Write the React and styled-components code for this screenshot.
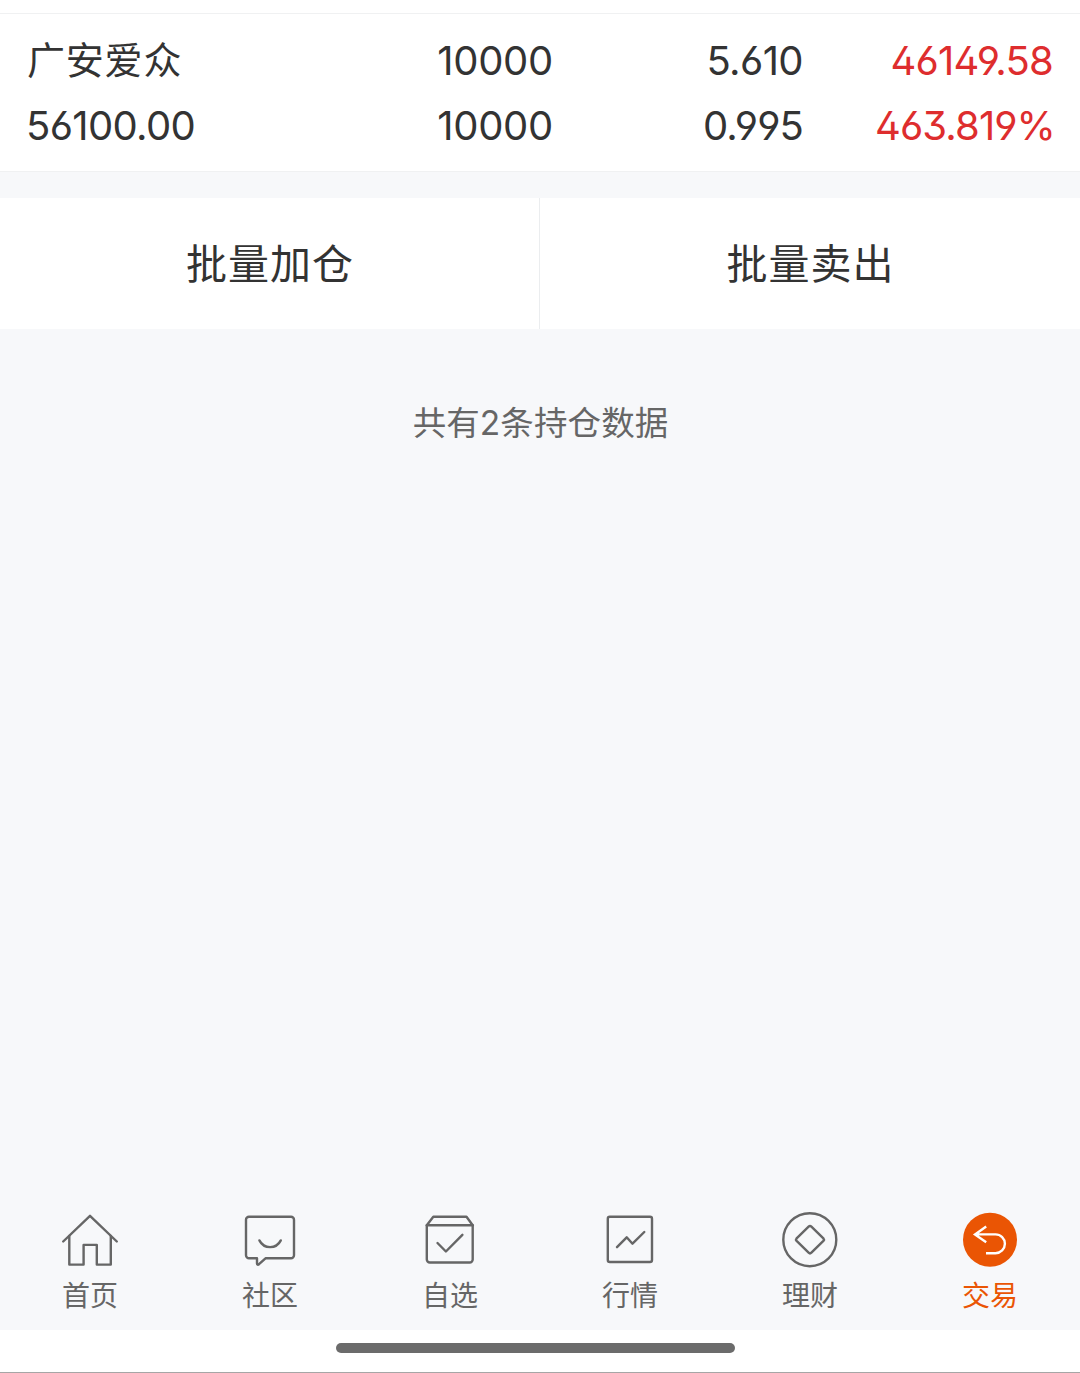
import React from 'react';
import styled, { createGlobalStyle } from 'styled-components';

const GlobalStyle = createGlobalStyle`
    * {
        box-sizing: border-box;
    }

    body {
        margin: 0;
        background: #f7f8fa;
        color: #333333;
        font-family: Inter, 'Noto Sans CJK SC', sans-serif;
    }
`;

const Page = styled.div`
    display: flex;
    flex-direction: column;
    height: 1373px;
    overflow: hidden;
`;

const Holdings = styled.section`
    padding-top: 13px;
    background: #ffffff;
`;

const Holding = styled.div`
    display: grid;
    grid-template-columns: 277px 250px 250px 250px;
    grid-template-rows: 65px 65px;
    height: 159px;
    padding: 14px 26px 13px;
    border-top: 1px solid #f0f1f2;
    border-bottom: 1px solid #f0f1f2;
`;

const StockName = styled.span`
    padding-left: 1px;
    font-size: 38px;
    line-height: 65px;
    letter-spacing: 0.8px;
`;

const Value = styled.span`
    margin-right: ${({ $percent }) => ($percent ? '-2px' : '0')};
    font-size: 40px;
    line-height: 66px;
    letter-spacing: ${({ $spacing }) => $spacing || '-0.6px'};
    text-align: ${({ $left }) => ($left ? 'left' : 'right')};
    color: ${({ $gain }) => ($gain ? '#de2d2e' : 'inherit')};
    font-feature-settings: 'cv03', 'cv04', 'ss01';
    white-space: nowrap;
`;

const Actions = styled.div`
    display: grid;
    grid-template-columns: 1fr 1fr;
    height: 131px;
    margin-top: 26px;
    background: #ffffff;
`;

const ActionButton = styled.button`
    padding: 0 0 5px 1px;
    border: 0;
    border-right: ${({ $divided }) => ($divided ? '1px solid #ebedef' : '0')};
    background: none;
    color: #333333;
    font-family: inherit;
    font-size: 41px;
    letter-spacing: 1px;
`;

const Summary = styled.p`
    flex: 1;
    margin: 0;
    padding: 70px 0 0 1px;
    color: #666666;
    font-size: 33.5px;
    line-height: 48px;
    letter-spacing: 0.1px;
    text-align: center;
`;

const TabBar = styled.nav`
    display: grid;
    grid-template-columns: repeat(6, 1fr);
    height: 120px;
`;

const Tab = styled.a`
    display: flex;
    flex-direction: column;
    align-items: center;
    color: ${({ $active }) => ($active ? '#ea5504' : '#666666')};

    svg {
        width: 60px;
        height: 60px;
        fill: none;
        stroke: currentColor;
        stroke-width: 2.4;
        stroke-linecap: round;
        stroke-linejoin: round;
    }
`;

const TabLabel = styled.span`
    font-size: 28px;
    line-height: 40px;
    margin-top: 6px;
`;

const HomeArea = styled.div`
    display: flex;
    justify-content: center;
    height: 43px;
    padding: 13px 9px 0 0;
    border-bottom: 1px solid #a6a6a6;
    background: #ffffff;
`;

const HomeIndicator = styled.div`
    width: 399px;
    height: 10px;
    border-radius: 5px;
    background: #6b6b6b;
`;

const HomeIcon = () => (
    <svg viewBox="0 0 60 60">
        <path d="M3.2 31.5 30 5.8l26.8 25.7" />
        <path d="M9.3 26v28.6h14.3V34.9h13.2v19.7h14V26" />
    </svg>
);

const CommunityIcon = () => (
    <svg viewBox="0 0 60 60">
        <path d="M9 6.8h42a3 3 0 0 1 3 3v35.5a3 3 0 0 1-3 3H25.5L19 54.2c-1 .8-2 .6-2-.8v-5.1H9a3 3 0 0 1-3-3V9.8a3 3 0 0 1 3-3Z" />
        <path d="M19.4 30.4c4.6 9 16.8 9 21.4 0" />
    </svg>
);

const WatchlistIcon = () => (
    <svg viewBox="0 0 60 60">
        <path d="M6.8 15.2 13.3 6.8h33.2l6.2 8.4v34.3a3 3 0 0 1-3 3H9.8a3 3 0 0 1-3-3Z" />
        <path d="M6.8 15.2h45.9" />
        <path d="M17.5 33l8.4 8.5 16.5-16.7" />
    </svg>
);

const MarketIcon = () => (
    <svg viewBox="0 0 60 60">
        <rect x="7.8" y="6.8" width="44.2" height="45.2" rx="2" />
        <path d="M17 37.2 26.7 27.3l5.8 6.4 11.8-11.7" />
    </svg>
);

const WealthIcon = () => (
    <svg viewBox="0 0 60 60">
        <circle cx="29.8" cy="29.7" r="26.5" />
        <path d="M28.6 16.6a2 2 0 0 1 2.8 0l12 11.7a2 2 0 0 1 0 2.6l-12 11.8a2 2 0 0 1-2.8 0l-12-11.8a2 2 0 0 1 0-2.6Z" />
    </svg>
);

const TradeIcon = () => (
    <svg viewBox="0 0 60 60">
        <circle cx="30" cy="29.7" r="27" fill="currentColor" stroke="none" />
        <path
            d="M26.2 16.5 15 24.4 26.2 32.2M15.5 24.4h20a9.4 9.4 0 0 1 0 18.8h-9.5"
            stroke="#ffffff"
            strokeLinecap="butt"
            strokeLinejoin="miter"
        />
    </svg>
);

const tabs = [
    { label: '首页', icon: <HomeIcon /> },
    { label: '社区', icon: <CommunityIcon /> },
    { label: '自选', icon: <WatchlistIcon /> },
    { label: '行情', icon: <MarketIcon /> },
    { label: '理财', icon: <WealthIcon /> },
    { label: '交易', icon: <TradeIcon />, active: true }
];

const App = () => {
    return (
        <Page lang="zh-CN">
            <GlobalStyle />
            <Holdings>
                <Holding>
                    <StockName>广安爱众</StockName>
                    <Value $spacing="-0.3px">10000</Value>
                    <Value>5.610</Value>
                    <Value $gain $spacing="-0.8px">46149.58</Value>
                    <Value $left $spacing="-0.65px">56100.00</Value>
                    <Value $spacing="-0.3px">10000</Value>
                    <Value $spacing="-0.9px">0.995</Value>
                    <Value $gain $percent $spacing="-0.9px">463.819%</Value>
                </Holding>
            </Holdings>
            <Actions>
                <ActionButton $divided>批量加仓</ActionButton>
                <ActionButton>批量卖出</ActionButton>
            </Actions>
            <Summary>共有2条持仓数据</Summary>
            <TabBar>
                {tabs.map(({ label, icon, active }) => (
                    <Tab key={label} $active={active}>
                        {icon}
                        <TabLabel>{label}</TabLabel>
                    </Tab>
                ))}
            </TabBar>
            <HomeArea>
                <HomeIndicator />
            </HomeArea>
        </Page>
    );
};

export default App;
